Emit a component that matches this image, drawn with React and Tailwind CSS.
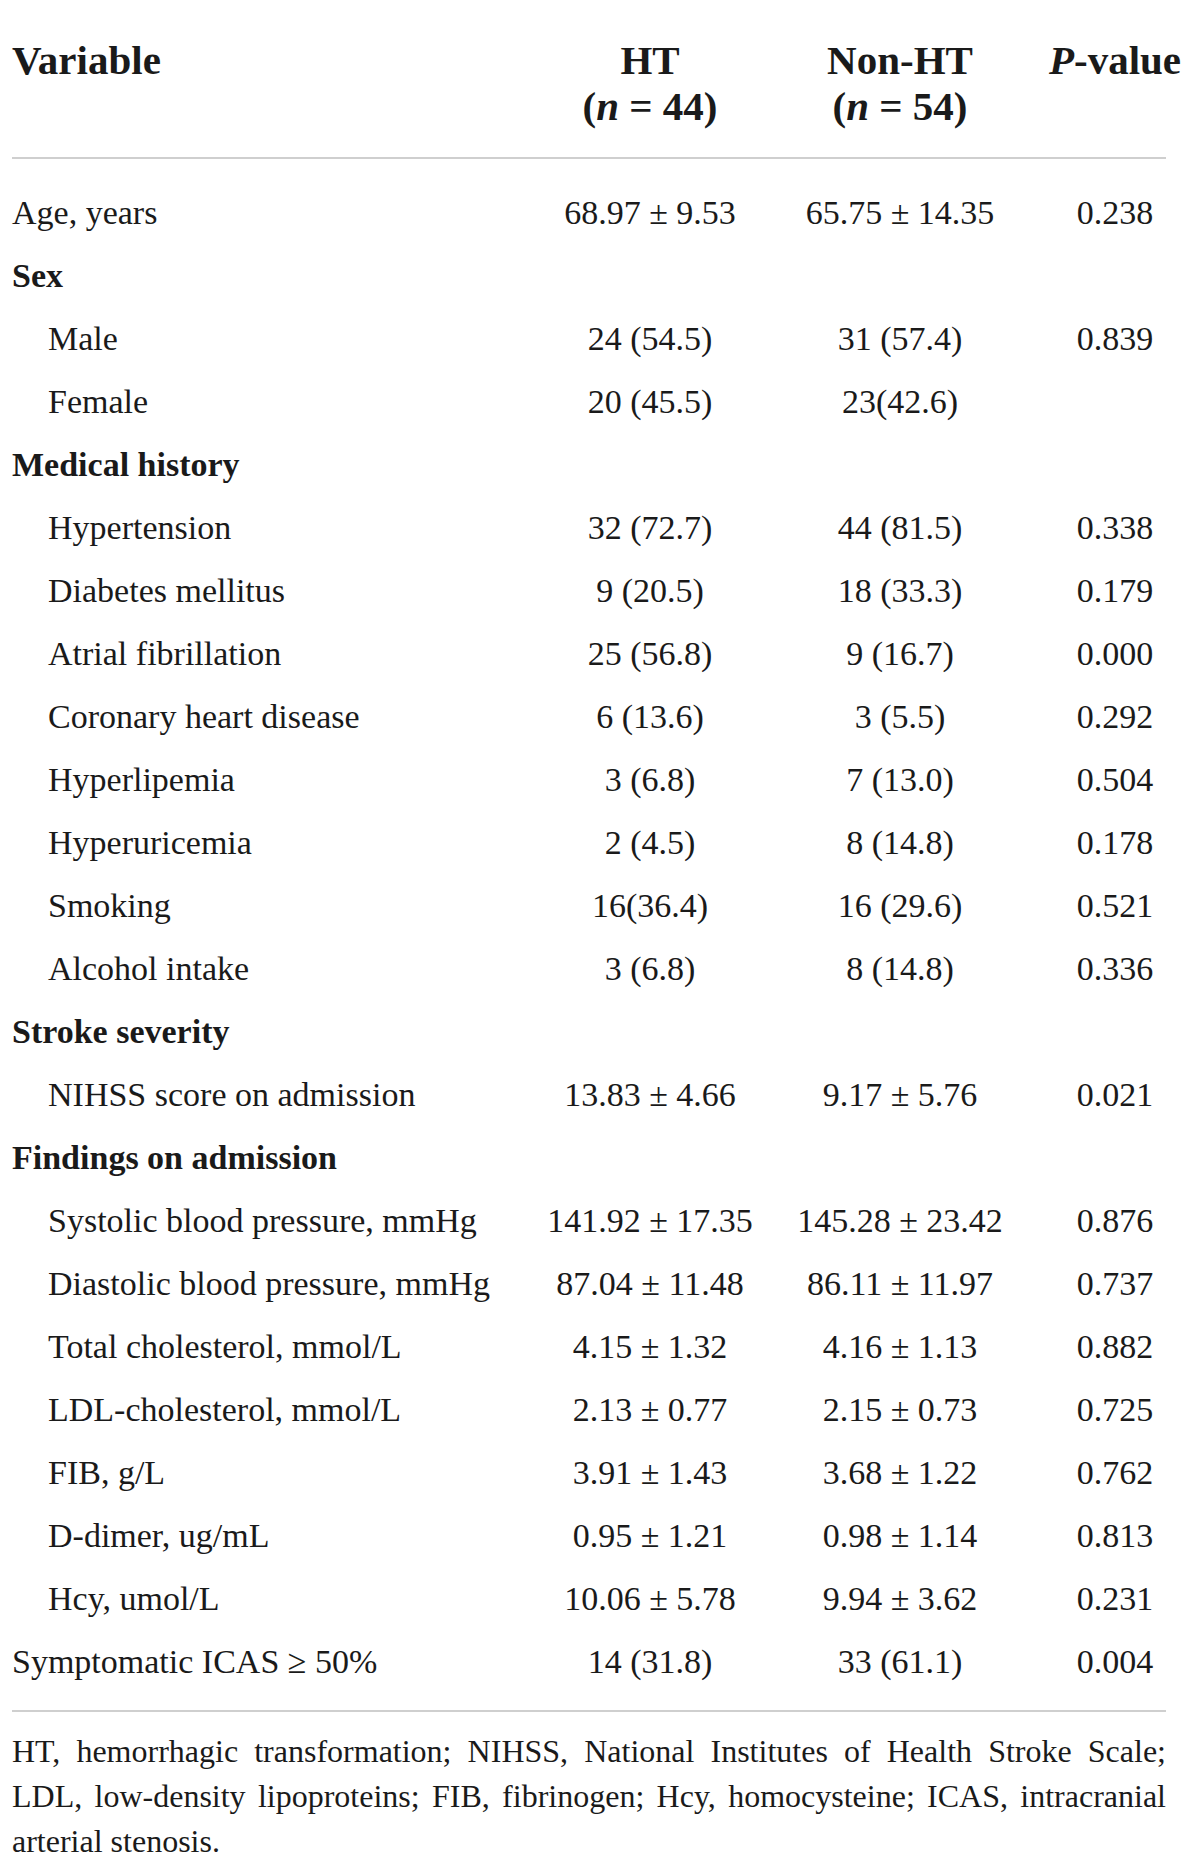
import React from "react";

const rows = [
  { label: "Age, years", ht: "68.97 ± 9.53", non: "65.75 ± 14.35", p: "0.238" },
  { label: "Sex", section: true },
  { label: "Male", indent: true, ht: "24 (54.5)", non: "31 (57.4)", p: "0.839" },
  { label: "Female", indent: true, ht: "20 (45.5)", non: "23(42.6)", p: "" },
  { label: "Medical history", section: true },
  { label: "Hypertension", indent: true, ht: "32 (72.7)", non: "44 (81.5)", p: "0.338" },
  { label: "Diabetes mellitus", indent: true, ht: "9 (20.5)", non: "18 (33.3)", p: "0.179" },
  { label: "Atrial fibrillation", indent: true, ht: "25 (56.8)", non: "9 (16.7)", p: "0.000" },
  { label: "Coronary heart disease", indent: true, ht: "6 (13.6)", non: "3 (5.5)", p: "0.292" },
  { label: "Hyperlipemia", indent: true, ht: "3 (6.8)", non: "7 (13.0)", p: "0.504" },
  { label: "Hyperuricemia", indent: true, ht: "2 (4.5)", non: "8 (14.8)", p: "0.178" },
  { label: "Smoking", indent: true, ht: "16(36.4)", non: "16 (29.6)", p: "0.521" },
  { label: "Alcohol intake", indent: true, ht: "3 (6.8)", non: "8 (14.8)", p: "0.336" },
  { label: "Stroke severity", section: true },
  { label: "NIHSS score on admission", indent: true, ht: "13.83 ± 4.66", non: "9.17 ± 5.76", p: "0.021" },
  { label: "Findings on admission", section: true },
  { label: "Systolic blood pressure, mmHg", indent: true, ht: "141.92 ± 17.35", non: "145.28 ± 23.42", p: "0.876" },
  { label: "Diastolic blood pressure, mmHg", indent: true, ht: "87.04 ± 11.48", non: "86.11 ± 11.97", p: "0.737" },
  { label: "Total cholesterol, mmol/L", indent: true, ht: "4.15 ± 1.32", non: "4.16 ± 1.13", p: "0.882" },
  { label: "LDL-cholesterol, mmol/L", indent: true, ht: "2.13 ± 0.77", non: "2.15 ± 0.73", p: "0.725" },
  { label: "FIB, g/L", indent: true, ht: "3.91 ± 1.43", non: "3.68 ± 1.22", p: "0.762" },
  { label: "D-dimer, ug/mL", indent: true, ht: "0.95 ± 1.21", non: "0.98 ± 1.14", p: "0.813" },
  { label: "Hcy, umol/L", indent: true, ht: "10.06 ± 5.78", non: "9.94 ± 3.62", p: "0.231" },
  { label: "Symptomatic ICAS ≥ 50%", ht: "14 (31.8)", non: "33 (61.1)", p: "0.004" },
];

const cols = "grid grid-cols-[518px_240px_260px_170px]";

const App = () => {
  return (
    <div className="min-h-screen bg-white pl-[12px] pt-[38px] text-[#1a1a1a] font-['Liberation_Serif','Times_New_Roman',serif]">
      {/* Header */}
      <div className={`${cols} text-[41px] leading-[45.5px] font-bold`}>
        <div>Variable</div>
        <div className="text-center">
          <div>HT</div>
          <div>
            (<i>n</i> = 44)
          </div>
        </div>
        <div className="text-center">
          <div>Non-HT</div>
          <div>
            (<i>n</i> = 54)
          </div>
        </div>
        <div className="text-center">
          <i>P</i>-value
        </div>
      </div>

      <div className="mt-[28px] h-[2px] w-[1154px] bg-[#cfcfcf]" />

      {/* Body */}
      <div className="pt-[22px] text-[34px] leading-[63px]">
        {rows.map((r, i) => (
          <div key={i} className={cols}>
            <div
              className={`whitespace-nowrap ${r.indent ? "pl-[36px]" : ""} ${
                r.section ? "font-bold" : ""
              }`}
            >
              {r.label}
            </div>
            <div className="text-center whitespace-nowrap">{r.ht}</div>
            <div className="text-center whitespace-nowrap">{r.non}</div>
            <div className="text-center whitespace-nowrap">{r.p}</div>
          </div>
        ))}
      </div>

      <div className="mt-[17px] h-[2px] w-[1154px] bg-[#cfcfcf]" />

      {/* Footnote */}
      <div className="mt-[17px] w-[1154px] text-[32px] leading-[45px]">
        <div className="text-justify [text-align-last:justify] whitespace-nowrap">
          HT, hemorrhagic transformation; NIHSS, National Institutes of Health Stroke Scale;
        </div>
        <div className="text-justify [text-align-last:justify] whitespace-nowrap">
          LDL, low-density lipoproteins; FIB, fibrinogen; Hcy, homocysteine; ICAS, intracranial
        </div>
        <div>arterial stenosis.</div>
      </div>
    </div>
  );
};

export default App;
